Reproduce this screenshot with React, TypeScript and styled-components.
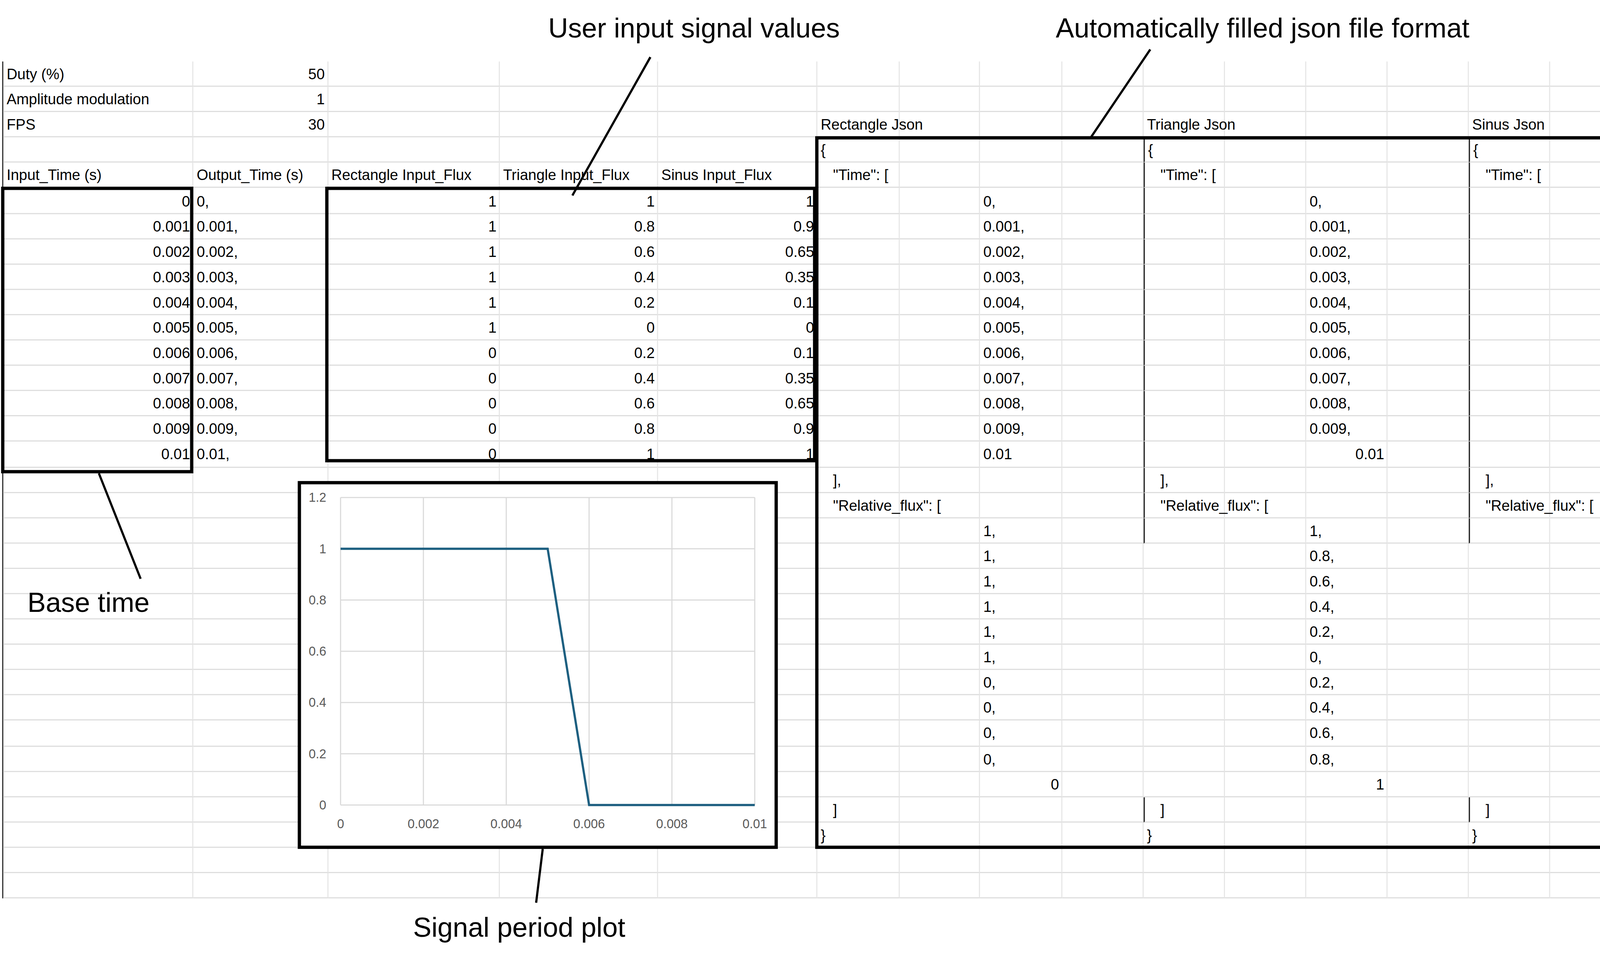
import React from "react";
import styled, { createGlobalStyle } from "styled-components";

const Global = createGlobalStyle`
  html, body { margin: 0; padding: 0; background: #fff; overflow: hidden; }
  body { font-family: "Liberation Sans", Arial, sans-serif; }
`;

const COLS = [173, 122.6, 156.4, 144, 145, 75, 73, 75, 74, 74, 74, 74, 74, 74, 74, 74, 10];
const ROWS = 33;
const RH = 23.1;

const Viewport = styled.div`
  width: 4410px;
  height: 2479px;
  overflow: hidden;
`;

const Page = styled.div`
  position: relative;
  width: 1568px;
  height: 881px;
  transform: scale(2.8125);
  transform-origin: 0 0;
  overflow: hidden;
  background: #fff;
`;

const SheetWrap = styled.div`
  padding: 56px 0 0 2px;
`;

const Sheet = styled.div`
  display: grid;
  grid-template-columns: ${COLS.map((c) => c + "px").join(" ")};
  grid-auto-rows: ${RH}px;
  border-left: 1.5px solid #222;
  width: max-content;
`;

const Cell = styled.div<{ $align: "left" | "right"; $black?: boolean }>`
  box-sizing: border-box;
  border-right: 1px solid #e6e6e6;
  border-bottom: 1px solid #dcdcdc;
  border-left: ${(p) => (p.$black ? "1.2px solid #111" : "none")};
  display: flex;
  align-items: center;
  justify-content: ${(p) => (p.$align === "right" ? "flex-end" : "flex-start")};
  padding: 1px 2px 0 3px;
  font-size: 13.5px;
  color: #000;
  white-space: pre;
  overflow: visible;
  position: relative;
`;

const Text = styled.span`
  position: relative;
  z-index: 1;
`;

const Frame = styled.div<{ $l: number; $t: number; $w: number; $h: number }>`
  position: absolute;
  left: ${(p) => p.$l}px;
  top: ${(p) => p.$t}px;
  width: ${(p) => p.$w}px;
  height: ${(p) => p.$h}px;
  box-sizing: border-box;
  border: 3px solid #000;
  pointer-events: none;
  z-index: 2;
`;

const ChartBox = styled.div`
  position: absolute;
  left: 271px;
  top: 438px;
  width: 437px;
  height: 335px;
  box-sizing: border-box;
  border: 3px solid #000;
  background: #fff;
  z-index: 3;
`;

const Note = styled.div<{ $l: number; $t: number }>`
  position: absolute;
  left: ${(p) => p.$l}px;
  top: ${(p) => p.$t}px;
  font-size: 25px;
  color: #000;
  white-space: nowrap;
  z-index: 4;
`;

const Lines = styled.svg`
  position: absolute;
  left: 0;
  top: 0;
  width: 1568px;
  height: 881px;
  pointer-events: none;
  z-index: 5;
`;

type C = { t: string; a: "left" | "right" };
const cells = new Map<string, C>();
const put = (r: number, c: number, t: string, a: "left" | "right" = "left") =>
  cells.set(`${r},${c}`, { t, a });

put(1, 0, "Duty (%)"); put(1, 1, "50", "right");
put(2, 0, "Amplitude modulation"); put(2, 1, "1", "right");
put(3, 0, "FPS"); put(3, 1, "30", "right");
["Input_Time (s)", "Output_Time (s)", "Rectangle Input_Flux", "Triangle Input_Flux", "Sinus Input_Flux"].forEach((h, i) => put(5, i, h));

const times = ["0", "0.001", "0.002", "0.003", "0.004", "0.005", "0.006", "0.007", "0.008", "0.009", "0.01"];
const rect = ["1", "1", "1", "1", "1", "1", "0", "0", "0", "0", "0"];
const tri = ["1", "0.8", "0.6", "0.4", "0.2", "0", "0.2", "0.4", "0.6", "0.8", "1"];
const sin = ["1", "0.9", "0.65", "0.35", "0.1", "0", "0.1", "0.35", "0.65", "0.9", "1"];
times.forEach((t, i) => {
  const r = 6 + i;
  put(r, 0, t, "right");
  put(r, 1, t + ",");
  put(r, 2, rect[i], "right");
  put(r, 3, tri[i], "right");
  put(r, 4, sin[i], "right");
});

const blocks: { name: string; c: number; vals: string[]; lastTimeRight: boolean }[] = [
  { name: "Rectangle Json", c: 5, vals: rect, lastTimeRight: false },
  { name: "Triangle Json", c: 9, vals: tri, lastTimeRight: true },
  { name: "Sinus Json", c: 13, vals: sin, lastTimeRight: true },
];
blocks.forEach((b) => {
  put(3, b.c, b.name);
  put(4, b.c, "{");
  put(5, b.c, '   "Time": [');
  times.forEach((t, i) => {
    if (i < 10) put(6 + i, b.c + 2, t + ",");
    else put(16, b.c + 2, t, b.lastTimeRight ? "right" : "left");
  });
  put(17, b.c, "   ],");
  put(18, b.c, '   "Relative_flux": [');
  b.vals.forEach((v, i) => {
    if (i < 10) put(19 + i, b.c + 2, v + ",");
    else put(29, b.c + 2, v, "right");
  });
  put(30, b.c, "   ]");
  put(31, b.c, "}");
});

const blackLeft = (r: number, c: number) =>
  (c === 9 || c === 13) && ((r >= 4 && r <= 19) || r === 30);

const Chart = () => {
  const x0 = 36, x1 = 413, y0 = 12, y1 = 292;
  const xs = (v: number) => x0 + (v / 0.01) * (x1 - x0);
  const ys = (v: number) => y1 - (v / 1.2) * (y1 - y0);
  const yt = [0, 0.2, 0.4, 0.6, 0.8, 1, 1.2];
  const xt = [0, 0.002, 0.004, 0.006, 0.008, 0.01];
  return (
    <svg width="431" height="329" viewBox="0 0 431 329">
      {yt.map((v) => (
        <g key={"y" + v}>
          <line x1={x0} x2={x1} y1={ys(v)} y2={ys(v)} stroke="#d9d9d9" strokeWidth="1" />
          <text x={23} y={ys(v) + 4} textAnchor="end" fontSize="11.5" fill="#595959" fontFamily="Liberation Sans, Arial, sans-serif">{String(v)}</text>
        </g>
      ))}
      {xt.map((v) => (
        <g key={"x" + v}>
          <line x1={xs(v)} x2={xs(v)} y1={y0} y2={y1} stroke="#d9d9d9" strokeWidth="1" />
          <text x={xs(v)} y={y1 + 21} textAnchor="middle" fontSize="11.5" fill="#595959" fontFamily="Liberation Sans, Arial, sans-serif">{String(v)}</text>
        </g>
      ))}
      <polyline
        points={`${xs(0)},${ys(1)} ${xs(0.005)},${ys(1)} ${xs(0.006)},${ys(0)} ${xs(0.01)},${ys(0)}`}
        fill="none" stroke="#1d5f80" strokeWidth="2"
      />
    </svg>
  );
};

export default function App() {
  const rows = [];
  for (let r = 1; r <= ROWS; r++) {
    for (let c = 0; c < COLS.length; c++) {
      const d = cells.get(`${r},${c}`);
      rows.push(
        <Cell key={`${r}-${c}`} $align={d ? d.a : "left"} $black={blackLeft(r, c)}>
          {d ? <Text>{d.t}</Text> : null}
        </Cell>
      );
    }
  }
  return (
    <>
      <Global />
      <Viewport>
        <Page>
          <SheetWrap>
            <Sheet>{rows}</Sheet>
          </SheetWrap>
          <Frame $l={1} $t={170} $w={175} $h={261} />
          <Frame $l={296} $t={170} $w={447} $h={251} />
          <Frame $l={742} $t={124} $w={825} $h={649} />
          <ChartBox>
            <Chart />
          </ChartBox>
          <Note $l={499} $t={11}>User input signal values</Note>
          <Note $l={961} $t={11}>Automatically filled json file format</Note>
          <Note $l={25} $t={534}>Base time</Note>
          <Note $l={376} $t={830}>Signal period plot</Note>
          <Lines viewBox="0 0 1568 881">
            <line x1="592" y1="52" x2="521" y2="178" stroke="#000" strokeWidth="2" />
            <line x1="1047" y1="45" x2="993" y2="125" stroke="#000" strokeWidth="2" />
            <line x1="90" y1="431" x2="128" y2="527" stroke="#000" strokeWidth="2" />
            <line x1="494" y1="773" x2="488" y2="822" stroke="#000" strokeWidth="2" />
          </Lines>
        </Page>
      </Viewport>
    </>
  );
}
